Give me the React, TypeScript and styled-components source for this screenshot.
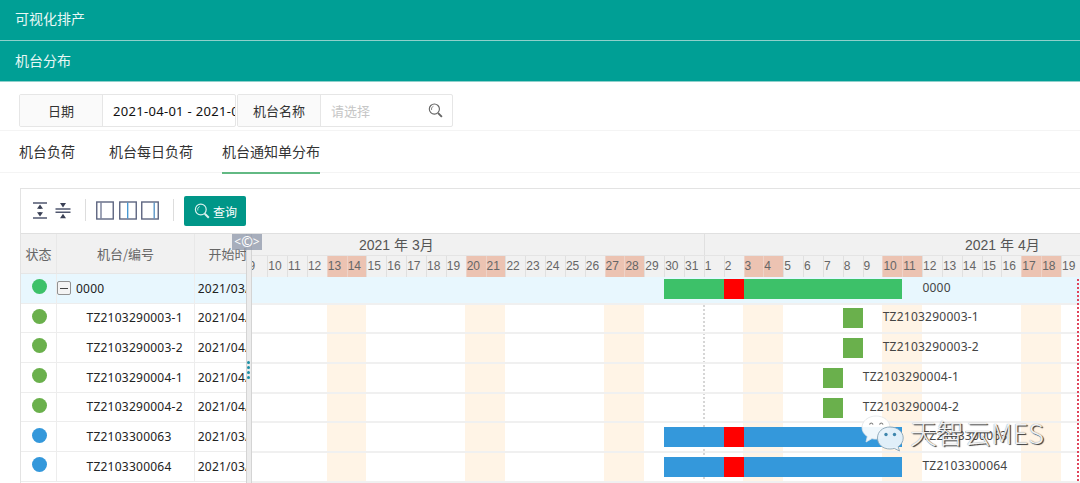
import React from "react";
import styled, { createGlobalStyle } from "styled-components";

const DAY = 19.85;
const ROW = 29.7;

const Global = createGlobalStyle`
  * { box-sizing: border-box; }
  body { margin: 0; background: #fff; overflow: hidden; }
`;

const Page = styled.div`
  position: relative;
  width: 1080px;
  height: 483px;
  overflow: hidden;
  font-family: "Noto Sans", "Noto Sans CJK SC", sans-serif;
  font-size: 12px;
  color: #333;
  white-space: nowrap;
`;

const TitleBar = styled.div<{ $h: number; $lift: number }>`
  height: ${(p) => p.$h}px;
  padding: 0 0 ${(p) => p.$lift}px 15px;
  display: flex;
  align-items: center;
  background: #009f95;
  border-bottom: 1px solid #8fd0cb;
  color: #e9f8f6;
  font-family: "Noto Sans CJK SC", sans-serif;
  font-size: 14px;
`;

const Filters = styled.div`
  height: 49px;
  padding: 12px 0 0 19px;
  display: flex;
  gap: 1px;
  border-bottom: 1px solid #f4f4f4;
`;

const Field = styled.div<{ $w: number }>`
  width: ${(p) => p.$w}px;
  height: 33px;
  display: flex;
  border: 1px solid #e6e6e6;
  border-radius: 2px;
  overflow: hidden;
`;

const FieldLabel = styled.div`
  flex: none;
  width: 83px;
  border-right: 1px solid #e6e6e6;
  background: #fafafa;
  display: flex;
  align-items: center;
  justify-content: center;
  font-family: "Noto Sans CJK SC", sans-serif;
  font-size: 13px;
  color: #333;
`;

const FieldValue = styled.div<{ $muted?: boolean }>`
  flex: 1;
  min-width: 0;
  overflow: hidden;
  padding: 0 ${(p) => (p.$muted ? 9 : 0)}px 0 10px;
  display: flex;
  align-items: center;
  justify-content: space-between;
  font-size: 13px;
  color: ${(p) => (p.$muted ? "#c6c6c6" : "#111")};
  letter-spacing: ${(p) => (p.$muted ? 0 : 0.3)}px;
`;

const Tabs = styled.div`
  height: 42px;
  padding-left: 19px;
  display: flex;
  gap: 34px;
  border-bottom: 1px solid #f4f4f4;
  font-family: "Noto Sans CJK SC", sans-serif;
  font-size: 14px;
`;

const Tab = styled.div<{ $active?: boolean; $gap?: number }>`
  height: 43px;
  line-height: 41px;
  margin-left: ${(p) => p.$gap ?? 0}px;
  border-bottom: ${(p) => (p.$active ? "2px solid #62b983" : "0")};
`;

const Panel = styled.div`
  margin: 15px 0 0 20px;
  height: 296px;
  border: 1px solid #e3e3e3;
  border-width: 1px 0 0 1px;
`;

const Toolbar = styled.div`
  height: 44px;
  padding: 0 0 2px 11px;
  display: flex;
  align-items: center;
`;

const ToolSvg = styled.svg<{ $ml?: number }>`
  flex: none;
  display: block;
  margin-left: ${(p) => p.$ml ?? 0}px;
`;

const Divider = styled.div<{ $ml: number }>`
  width: 1px;
  height: 22px;
  margin-left: ${(p) => p.$ml}px;
  background: #ddd;
`;

const QueryButton = styled.button`
  width: 62px;
  height: 30px;
  margin: 2px 0 0 10px;
  padding: 0 0 0 10px;
  border: 0;
  border-radius: 2px;
  background: #009688;
  color: #fff;
  display: flex;
  align-items: center;
  gap: 3px;
  font: 12px "Noto Sans CJK SC", sans-serif;
`;

const Body = styled.div`
  display: flex;
  height: 250px;
  border-top: 1px solid #e0e0e0;
`;

const Left = styled.div`
  flex: none;
  width: 225px;
  overflow: hidden;
`;

const columns = "36px 138px 80px";

const LeftHead = styled.div`
  display: grid;
  grid-template-columns: ${columns};
  height: 40px;
  background: #f1f1f1;
`;

const HeadCell = styled.div`
  display: flex;
  align-items: center;
  justify-content: center;
  padding-bottom: 1px;
  border-right: 1px solid #e8e8e8;
  border-bottom: 1px solid #e6e6e6;
  font-family: "Noto Sans CJK SC", sans-serif;
  font-size: 13px;
  color: #666;
`;

const LeftRow = styled.div<{ $top?: boolean }>`
  display: grid;
  grid-template-columns: ${columns};
  height: ${ROW}px;
  background: ${(p) => (p.$top ? "#e8f7fe" : "#fff")};
  border-bottom: 1px solid #ededed;
`;

const Cell = styled.div<{ $pad?: number }>`
  display: flex;
  align-items: center;
  gap: 5px;
  padding-left: ${(p) => p.$pad ?? 0}px;
  padding-bottom: 0.5px;
  border-right: 1px solid #ededed;
  color: #222;
  letter-spacing: 0.24px;
`;

const Dot = styled.div<{ $c: string }>`
  width: 15px;
  height: 15px;
  margin: 0 0 3px 11px;
  border-radius: 50%;
  background: ${(p) => p.$c};
`;

const Collapse = styled.div`
  width: 14px;
  height: 14px;
  border: 1.5px solid #929292;
  border-radius: 2px;
  background: #f4f4f4;
  display: flex;
  align-items: center;
  justify-content: center;
  &::after {
    content: "";
    width: 8px;
    height: 1px;
    background: #444;
  }
`;

const Splitter = styled.div`
  flex: none;
  width: 6px;
  display: flex;
  flex-direction: column;
  align-items: center;
  gap: 2px;
  padding: 127px 0 0 0;
  background: #ececec;
  border-left: 1px solid #d4d4d4;
  border-right: 1px solid #d4d4d4;
`;

const Grip = styled.i`
  width: 3px;
  height: 3px;
  margin-left: -2px;
  border-radius: 50%;
  background: #1d8fa5;
`;

const Chart = styled.div`
  flex: 1;
  min-width: 0;
  overflow: hidden;
`;

const Months = styled.div`
  display: flex;
  height: 22px;
  background: #f1f1f1;
  border-bottom: 1px solid #e4e4e4;
  color: #555;
  font: 14px "Liberation Sans", "Noto Sans CJK SC", sans-serif;
  line-height: 22px;
`;

const Month = styled.div<{ $w: number; $pad: number }>`
  flex: none;
  width: ${(p) => p.$w}px;
  padding-left: ${(p) => p.$pad}px;
  border-right: 1px solid #e0e0e0;
`;

const Days = styled.div`
  display: flex;
  height: 20.5px;
  margin-left: -4.6px;
  background: #f1f1f1;
`;

const Day = styled.div<{ $off: boolean }>`
  flex: none;
  width: ${DAY}px;
  padding: 0;
  border-left: 1px solid ${(p) => (p.$off ? "#eed3c8" : "#e0e0e0")};
  background: ${(p) => (p.$off ? "#ecc3b2" : "transparent")};
  color: #666;
  font: 12px "Liberation Sans", sans-serif;
  line-height: 20px;
`;

const Canvas = styled.div`
  position: relative;
  height: 208px;
`;

const Stripes = styled.div`
  position: absolute;
  inset: 27px 0 0 -4.8px;
  display: flex;
`;

const Stripe = styled.div<{ $off: boolean }>`
  flex: none;
  width: ${DAY}px;
  background: ${(p) => (p.$off ? "#fff4e6" : "transparent")};
`;

const ChartRow = styled.div<{ $h: number; $top?: boolean }>`
  position: relative;
  height: ${(p) => p.$h}px;
  border-bottom: 2px solid #f0f0f0;
  background: ${(p) => (p.$top ? "#e8f7fe" : "transparent")};
`;

const Bar = styled.div<{ $from: number; $days: number; $c: string; $y: number }>`
  position: absolute;
  left: ${(p) => p.$from * DAY - 4.6}px;
  top: ${(p) => p.$y}px;
  width: ${(p) => p.$days * DAY}px;
  height: 20px;
  background: ${(p) => p.$c};
`;

const BarLabel = styled.div<{ $at: number; $y: number }>`
  position: absolute;
  left: ${(p) => p.$at * DAY - 4.5}px;
  top: ${(p) => p.$y}px;
  line-height: 18px;
  color: #444;
  letter-spacing: 0.24px;
`;

const DottedLine = styled.div<{ $x: number; $y: number; $c: string }>`
  position: absolute;
  left: ${(p) => p.$x}px;
  top: ${(p) => p.$y}px;
  bottom: 0;
  width: 2px;
  background: repeating-linear-gradient(${(p) => p.$c} 0 2px, transparent 2px 4px);
`;

const Badge = styled.div`
  position: absolute;
  left: 232px;
  top: 234px;
  width: 30px;
  height: 16px;
  display: flex;
  align-items: center;
  justify-content: center;
  background: rgba(142, 151, 170, 0.75);
  color: #fff;
  font: 12px/16px "Noto Sans", sans-serif;
`;

const BadgeMark = styled.span`
  font-size: 14px;
`;

const Watermark = styled.div`
  position: absolute;
  left: 861px;
  top: 414px;
  display: flex;
  gap: 6px;
`;

const WatermarkText = styled.div`
  margin-top: 3px;
  font: 300 27px/32px "Noto Sans CJK SC", sans-serif;
  color: rgba(255, 255, 255, 0.92);
  text-shadow: 1.3px 1.3px 0.8px #3c3c3c, 0 0 1px #777;
  letter-spacing: 0.1px;
`;

const GREEN = "#6ab04c";
const BLUE = "#3498db";
const LIME = "#3dc169";

type Row = { name: string; start: string; c: string; from: number; days: number; h: number; y: number; hot?: boolean; top?: boolean };

const rows: Row[] = [
  { name: "0000", start: "2021/03/30", c: LIME, from: 21, days: 12, h: 28.2, y: 2.2, hot: true, top: true },
  { name: "TZ2103290003-1", start: "2021/04/08", c: GREEN, from: 30, days: 1, h: ROW, y: 3.8 },
  { name: "TZ2103290003-2", start: "2021/04/08", c: GREEN, from: 30, days: 1, h: ROW, y: 3.8 },
  { name: "TZ2103290004-1", start: "2021/04/07", c: GREEN, from: 29, days: 1, h: ROW, y: 3.8 },
  { name: "TZ2103290004-2", start: "2021/04/07", c: GREEN, from: 29, days: 1, h: ROW, y: 3.8 },
  { name: "TZ2103300063", start: "2021/03/30", c: BLUE, from: 21, days: 12, h: ROW, y: 3.8, hot: true },
  { name: "TZ2103300064", start: "2021/03/30", c: BLUE, from: 21, days: 12, h: ROW, y: 3.8, hot: true },
];

const days = Array.from({ length: 43 }, (_, i) => ({
  n: i < 23 ? i + 9 : i - 22,
  off: i % 7 === 4 || i % 7 === 5,
}));

const Search = ({ size, color }: { size: number; color: string }) => (
  <svg width={size} height={size} viewBox="0 0 16 16" fill="none" stroke={color}>
    <circle cx="6.8" cy="6.5" r="5.4" strokeWidth="1.2" />
    <path d="M3.8 7.5A3.2 3.2 0 0 1 5.8 3.5" strokeWidth="0.8" />
    <path d="M10.8 10.8l4 4" strokeWidth="2" />
  </svg>
);

const ColumnsIcon = ({ ml, line, edge }: { ml: number; line: number; edge: string }) => (
  <ToolSvg $ml={ml} width="18" height="19" viewBox="0 0 18 19" fill="none">
    <rect x="0.75" y="1" width="16.5" height="17" stroke="#5d6580" strokeWidth="1.4" />
    <path d={`M${line} 1.5v16`} stroke={edge} strokeWidth="1.3" />
  </ToolSvg>
);

export default function App() {
  return (
    <Page>
      <Global />
      <TitleBar $h={41} $lift={4}>可视化排产</TitleBar>
      <TitleBar $h={41} $lift={2}>机台分布</TitleBar>
      <Filters>
        <Field $w={217}>
          <FieldLabel>日期</FieldLabel>
          <FieldValue>2021-04-01 - 2021-04-30</FieldValue>
        </Field>
        <Field $w={216}>
          <FieldLabel>机台名称</FieldLabel>
          <FieldValue $muted>
            请选择
            <Search size={15} color="#666" />
          </FieldValue>
        </Field>
      </Filters>
      <Tabs>
        <Tab>机台负荷</Tab>
        <Tab>机台每日负荷</Tab>
        <Tab $active $gap={-5}>机台通知单分布</Tab>
      </Tabs>
      <Panel>
        <Toolbar>
          <ToolSvg width="16" height="17" viewBox="0 0 16 17">
            <path d="M1 1h14M1 16h14M8 5v2M8 10v2" stroke="#50576f" strokeWidth="1.5" />
            <path d="M8 2.4l3 4.300H5zM8 14.600l3-4.300H5z" fill="#3a4055" />
          </ToolSvg>
          <ToolSvg $ml={7} width="16" height="17" viewBox="0 0 16 17">
            <path d="M0.500 7h15M0.500 10.300h15" stroke="#50576f" strokeWidth="1.5" />
            <path d="M8 5.500l3-4.500H5zM8 11.800l3 4.500H5z" fill="#3a4055" />
          </ToolSvg>
          <Divider $ml={14} />
          <ColumnsIcon ml={10} line={5} edge="#6b7390" />
          <ColumnsIcon ml={5} line={8.7} edge="#3d93d1" />
          <ColumnsIcon ml={4} line={13.2} edge="#4f8fc4" />
          <Divider $ml={14} />
          <QueryButton>
            <Search size={16} color="#d9f1ee" />
            查询
          </QueryButton>
        </Toolbar>
        <Body>
          <Left>
            <LeftHead>
              <HeadCell>状态</HeadCell>
              <HeadCell>机台/编号</HeadCell>
              <HeadCell>开始时间</HeadCell>
            </LeftHead>
            {rows.map((r) => (
              <LeftRow key={r.name} $top={r.top}>
                <Cell>
                  <Dot $c={r.c} />
                </Cell>
                <Cell $pad={r.top ? 0 : 29.5}>
                  {r.top && <Collapse />}
                  {r.name}
                </Cell>
                <Cell $pad={2.7}>{r.start}</Cell>
              </LeftRow>
            ))}
          </Left>
          <Splitter>
            <Grip />
            <Grip />
            <Grip />
            <Grip />
          </Splitter>
          <Chart>
            <Months>
              <Month $w={453} $pad={107}>2021 年 3月</Month>
              <Month $w={600} $pad={260}>2021 年 4月</Month>
            </Months>
            <Days>
              {days.map((d, i) => (
                <Day key={i} $off={d.off}>{d.n}</Day>
              ))}
            </Days>
            <Canvas>
              <Stripes>
                {days.map((d, i) => (
                  <Stripe key={i} $off={d.off} />
                ))}
              </Stripes>
              <DottedLine $x={451} $y={28} $c="#d6d6d6" />
              {rows.map((r) => (
                <ChartRow key={r.name} $h={r.h} $top={r.top}>
                  <Bar $from={r.from} $days={r.days} $c={r.c} $y={r.y} />
                  {r.hot && <Bar $from={24} $days={1} $c="#ff0000" $y={r.y} />}
                  <BarLabel $at={r.from + r.days + 1} $y={r.y}>{r.name}</BarLabel>
                </ChartRow>
              ))}
              <DottedLine $x={825} $y={2} $c="#e0455c" />
            </Canvas>
          </Chart>
        </Body>
      </Panel>
      <Badge>
        <span>&lt;</span>
        <BadgeMark>©</BadgeMark>
        <span>&gt;</span>
      </Badge>
      <Watermark>
        <svg width="43" height="38" viewBox="0 0 43 38">
          <path
            d="M15 2C7 2 1 7.200 1 13.500c0 3.800 2 6.800 5.300 9L5 28l6-3.400c1.300.4 2.700.5 4 .5 8 0 14-5 14-11.600S23 2 15 2z"
            fill="#fff" fillOpacity=".92" stroke="#dfe3e6" strokeWidth=".8"
          />
          <path
            d="M29 13c-7.500 0-12.500 4.800-12.500 11S21.500 35 29 35c1.500 0 3-.2 4.300-.6L38.500 37l-1.300-4.300c3-2 5-5 5-8.700 0-6.200-5.700-11-13.200-11z"
            fill="#e6f2fa" fillOpacity=".97" stroke="#8aa5b5" strokeWidth=".9"
          />
          <path d="M8.500 10.500q1.700-3 3.600 0M18.500 10.500q1.700-3 3.600 0" stroke="#777" fill="none" strokeWidth="1.200" />
          <circle cx="25" cy="20.500" r="1.700" fill="#3e86ad" />
          <circle cx="33.500" cy="20.500" r="1.700" fill="#3e86ad" />
        </svg>
        <WatermarkText>天智云MES</WatermarkText>
      </Watermark>
    </Page>
  );
}
